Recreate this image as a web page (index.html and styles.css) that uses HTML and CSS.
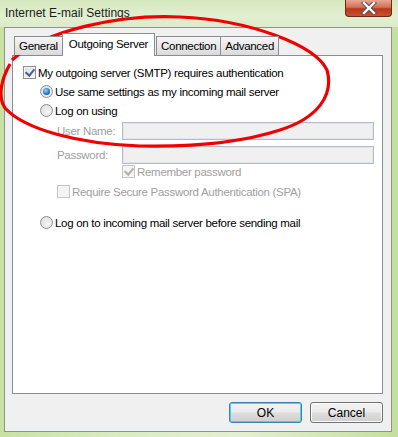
FILE: index.html
```html
<!DOCTYPE html>
<html>
<head>
  <title>Internet E-mail Settings</title>
  <link rel="stylesheet" href="styles.css">
</head>
<body>
  <div class="window">
    <div class="titlebar">
      <span class="title">Internet E-mail Settings</span>
      <span class="close-btn">
        <svg width="18" height="12" viewBox="0 0 18 12">
          <path d="M4 1 L14 11 M14 1 L4 11" stroke="#4a4f58" stroke-width="4.2" stroke-linecap="square"/>
          <path d="M4 1 L14 11 M14 1 L4 11" stroke="#ffffff" stroke-width="2.4" stroke-linecap="square"/>
        </svg>
      </span>
    </div>

    <div class="frame">
      <div class="tabs">
        <div class="tab">General</div>
        <div class="tab active">Outgoing Server</div>
        <div class="tab">Connection</div>
        <div class="tab">Advanced</div>
      </div>

      <div class="panel">
        <div class="row">
          <span class="check checked"></span>
          <span>My outgoing server (SMTP) requires authentication</span>
        </div>

        <div class="row indent">
          <span class="radio selected"></span>
          <span>Use same settings as my incoming mail server</span>
        </div>

        <div class="row indent">
          <span class="radio"></span>
          <span>Log on using</span>
        </div>

        <div class="fields">
          <div class="field">
            <label>User Name:</label>
            <div class="textbox"></div>
          </div>
          <div class="field">
            <label>Password:</label>
            <div class="textbox"></div>
          </div>
        </div>

        <div class="row small remember disabled">
          <span class="check checked dim"></span>
          <span>Remember password</span>
        </div>
        <div class="row small spa disabled">
          <span class="check dim"></span>
          <span>Require Secure Password Authentication (SPA)</span>
        </div>

        <div class="row small indent last">
          <span class="radio"></span>
          <span>Log on to incoming mail server before sending mail</span>
        </div>
      </div>

      <div class="buttons">
        <button class="btn default">OK</button>
        <button class="btn">Cancel</button>
      </div>
    </div>

    <!-- red marker drawn over the dialog -->
    <svg class="marker" width="398" height="437" viewBox="0 0 398 437">
      <path d="M12 60 C 45 30, 120 14, 180 17 C 250 20, 315 45, 327 70 C 334 95, 318 118, 280 130 C 240 143, 190 147, 140 146 C 80 144, 25 130, 5 108 C -3 96, 2 78, 10 64"
            fill="none" stroke="#f00000" stroke-width="3.2"/>
    </svg>
  </div>
</body>
</html>
```

FILE: styles.css
```css
body {
  margin: 0;
  font-family: "Liberation Sans", Arial, sans-serif;
  font-size: 11.5px;
  letter-spacing: -0.3px;
  color: #000;
}

.window {
  position: relative;
  width: 398px;
  height: 437px;
  overflow: hidden;
  background: linear-gradient(90deg, #c8e2a0 0%, #d9edbd 30%, #e3f0cf 60%, #c5e09a 100%);
  display: flex;
  flex-direction: column;
}

.titlebar {
  height: 27px;
  display: flex;
  justify-content: space-between;
  align-items: flex-start;
  background: linear-gradient(180deg, #d4e8bc 0%, #e2efd2 60%, #dcebc9 100%);
}

.title {
  padding: 6px 0 0 5px;
  font-size: 12px;
  letter-spacing: 0;
  color: #1c1c1c;
}

.close-btn {
  width: 47px;
  height: 17px;
  margin-right: 6px;
  box-sizing: border-box;
  border: 1px solid #6a2a1a;
  border-top: none;
  border-radius: 0 0 4px 4px;
  background: linear-gradient(180deg, #e8a793 0%, #d47058 45%, #b8381c 55%, #c9502e 100%);
  display: flex;
  align-items: center;
  justify-content: center;
}

.frame {
  margin: 0 6px 5px 4px;
  flex: 1;
  background: #f0f0f0;
  border: 1px solid #8b9196;
  padding: 5px 8px 0 7px;
  display: flex;
  flex-direction: column;
}

.tabs {
  display: flex;
  align-items: flex-end;
  padding-left: 2px;
  height: 22px;
  position: relative;
  z-index: 1;
}

.tab {
  height: 18px;
  padding: 0 4px;
  line-height: 18px;
  border: 1px solid #898c95;
  border-bottom: none;
  margin-right: -1px;
  background: linear-gradient(180deg, #f4f4f4 0%, #e9e9e9 50%, #dadada 100%);
}

.tab.active {
  height: 22px;
  line-height: 20px;
  padding: 0 6px;
  margin: 0 1px -1px 0;
  background: #fff;
  position: relative;
  z-index: 2;
}

.panel {
  background: #fff;
  border: 1px solid #898c95;
  height: 339px;
  box-sizing: border-box;
  padding: 7px 0 0 10px;
}

.row {
  display: flex;
  align-items: center;
  gap: 2px;
  height: 19px;
}

.row.small {
  height: 13px;
}

.indent {
  padding-left: 17px;
}

.check {
  width: 13px;
  height: 13px;
  flex: none;
  box-sizing: border-box;
  border: 1px solid #8e8f8f;
  background: linear-gradient(135deg, #dcdcdc 0%, #fbfbfb 100%);
  box-shadow: inset 0 0 0 1px #f4f4f4;
  position: relative;
}

.check.checked::after {
  content: "";
  position: absolute;
  left: 3px;
  top: 0px;
  width: 4px;
  height: 7px;
  border: solid #4a5f97;
  border-width: 0 2px 2px 0;
  transform: rotate(40deg);
}

.check.dim {
  border-color: #c5c5c5;
  background: #f4f4f4;
}

.check.dim.checked::after {
  border-color: #b0b0b0;
}

.radio {
  width: 13px;
  height: 13px;
  flex: none;
  box-sizing: border-box;
  border-radius: 50%;
  border: 1px solid #8e8f8f;
  background: radial-gradient(circle at 60% 60%, #f8f8f8 0%, #d6d6d6 100%);
  position: relative;
}

.radio.selected::after {
  content: "";
  position: absolute;
  left: 2px;
  top: 2px;
  width: 7px;
  height: 7px;
  border-radius: 50%;
  background: radial-gradient(circle at 40% 35%, #8fd6ff 0%, #1b74c4 60%, #0d3c7a 100%);
}

.fields {
  display: flex;
  flex-direction: column;
  gap: 4px;
  padding-top: 1px;
}

.field {
  display: flex;
  align-items: center;
  height: 20px;
  padding-left: 34px;
}

.field label {
  width: 65px;
  color: #a0a0a0;
}

.textbox {
  width: 252px;
  height: 18px;
  box-sizing: border-box;
  border: 1px solid #b5bcc7;
  box-shadow: inset 0 0 0 1px #e2e6ec;
  background: #f0f0f0;
}

.disabled {
  color: #a0a0a0;
}

.remember {
  padding-left: 99px;
}

.spa {
  padding-left: 34px;
  margin-top: 7px;
}

.last {
  margin-top: 18px;
}

.buttons {
  display: flex;
  justify-content: flex-end;
  gap: 8px;
  padding-top: 8px;
}

.btn {
  width: 73px;
  height: 21px;
  font-family: "Liberation Sans", Arial, sans-serif;
  font-size: 12px;
  color: #000;
  border: 1px solid #707070;
  border-radius: 3px;
  background: linear-gradient(180deg, #f2f2f2 0%, #ebebeb 48%, #dddddd 52%, #cfcfcf 100%);
  box-shadow: inset 0 0 0 1px #fcfcfc;
  padding: 0;
}

.btn.default {
  border-color: #3c7fb1;
  box-shadow: inset 0 0 0 1px #48d0f8;
}

.marker {
  position: absolute;
  left: 0;
  top: 0;
  pointer-events: none;
}
```
